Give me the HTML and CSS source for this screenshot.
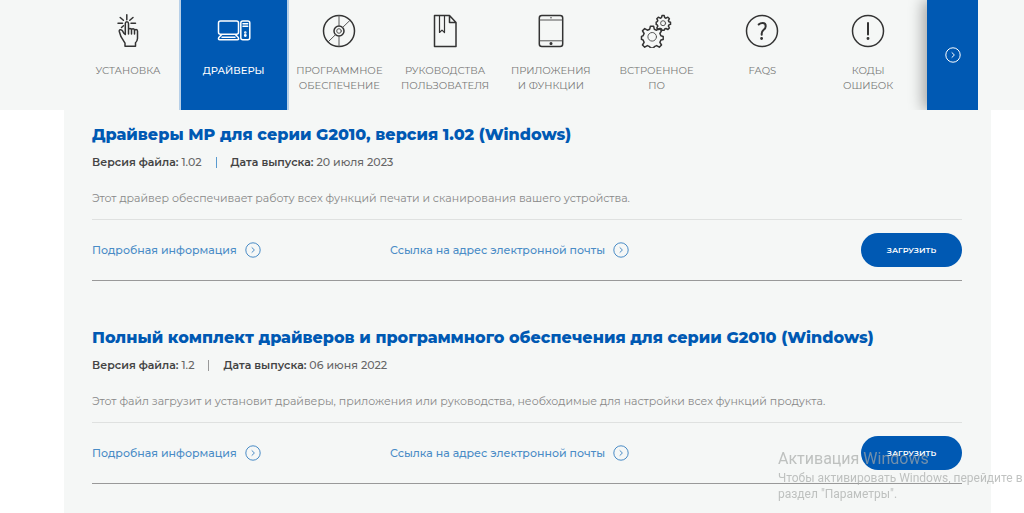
FILE: index.html
```html
<!DOCTYPE html>
<html lang="ru">
<head>
<meta charset="utf-8">
<meta name="viewport" content="width=device-width, initial-scale=1">
<title>Драйверы</title>
<link rel="stylesheet" href="styles.css">
</head>
<body>
<svg class="sprite" aria-hidden="true">
  <symbol id="chevron" viewBox="0 0 16 16">
    <circle cx="8" cy="8" r="7.2"/><path d="M6.7 5.4 9.4 8l-2.7 2.6"/>
  </symbol>
</svg>
<nav class="tabs">
  <div class="tabs-list">
    <a class="tab" href="#">
      <svg class="icon" viewBox="0 0 34 34"><path d="M14.300 20.500V9.500q0-1.800 1.600-1.800t1.600 1.800v6.200q0-1.300 1.500-1.300t1.500 1.600q.2-1.200 1.500-1.200t1.500 1.700q.2-1 1.500-1t1.500 1.500v7.500q-.2 2.600-2 4.200v3.500H14v-3l-4-6.500-1.700-5.200q-.3-1.600 1-1.800 1.400-.2 2.200 1.200l1.300 2.300zM17.500 15v5M20.500 15.500v4.500M23.500 16.500v3.500"/><path d="M15.800.8v5M9.200 3.500l3.200 2.800M22 3.500l-3.200 2.800M7 9.300h4.500M20 9.300h4.500M10.500 13.500l2-1.800"/></svg>
      <span>Установка</span></a>
    <a class="tab active" href="#" aria-current="page">
      <svg class="icon" viewBox="0 0 34 34"><rect x="1.500" y="7" width="20" height="13.200" rx="2"/><path d="M4.500 20.700 1.800 23.500q-1 2.200 1 2.200h17.500q2 0 1-2.200l-2.700-2.800M5 23.200h13"/><rect x="23.800" y="7" width="9" height="18.700" rx="2"/><path d="M26 9.700h4.700M26 12.200h4.700"/><circle cx="28.300" cy="18.500" r=".5"/><circle cx="28.300" cy="21.500" r=".7"/></svg>
      <span>Драйверы</span></a>
    <a class="tab" href="#">
      <svg class="icon" viewBox="0 0 34 34"><circle cx="17" cy="17" r="15.500"/><circle cx="17" cy="17" r="5"/><circle class="thin" cx="17" cy="17" r="2.300"/><path class="thin" d="M17 1.500V12M17 22v10.500M27.800 6.500l-7.200 7M6.300 27.700l7.200-7"/></svg>
      <span>Программное обеспечение</span></a>
    <a class="tab" href="#">
      <svg class="icon" viewBox="0 0 34 34"><path d="M6.500 1.500h15l6.500 7v24H6.500zM21.500 1.500v7H28"/><path class="mark" d="M11.500 1.500v17l2.500-2.400 2.500 2.400v-17"/></svg>
      <span>Руководства пользователя</span></a>
    <a class="tab" href="#">
      <svg class="icon" viewBox="0 0 34 34"><rect x="5.300" y="1.500" width="23.400" height="31" rx="2.500"/><path class="thin" d="M6 6h22M6 26.800h22M16.500 3.800h1"/><circle class="solid" cx="17" cy="29.500" r=".8"/></svg>
      <span>Приложения<br>и функции</span></a>
    <a class="tab" href="#">
      <svg class="icon" viewBox="0 0 34 34"><path d="M9.700 15.200l.7-3h3.200l.7 3 2.300 1 2.700-1.600 2.200 2.200-1.600 2.700 1 2.300 2.300.6v3l-2.300.6-1 2.300 1.600 2.700-2.200 2.200-2.700-1.600-2.300 1-.7 1.400h-3.200l-.7-1.400-2.300-1-2.700 1.600-2.200-2.200 1.600-2.700-1-2.300-1.600-.6v-3l1.600-.6 1-2.300-1.600-2.700 2.200-2.200 2.700 1.600z"/><circle class="thin" cx="12.200" cy="22.800" r="4.300"/><path d="M21.500 3.600l.5-2h2.200l.5 2 1.300.6 1.900-1 1.500 1.500-1 1.900.5 1.100 1.600.5v2.200l-1.600.5-.5 1.200 1 1.900-1.500 1.500-1.900-1-1.300.5-.5 1.200H22l-.5-1.200-1.300-.5-1.900 1-1.500-1.500 1-1.900-.6-1.200-1-.5V8.200l1-.5.600-1.100-1-1.900 1.500-1.500 1.900 1z"/><circle class="thin" cx="23.100" cy="9.200" r="2.500"/></svg>
      <span>Встроенное<br>ПО</span></a>
    <a class="tab" href="#">
      <svg class="icon" viewBox="0 0 34 34"><circle cx="17" cy="17" r="15.500"/><path class="heavy" d="M13.700 10.500q1.500-1.500 4-1.500 3 0 3 3.200 0 2-2 3.500-2 1.600-2 3.800v1.200"/><circle class="solid" cx="16.600" cy="24.500" r=".7"/></svg>
      <span>FAQs</span></a>
    <a class="tab" href="#">
      <svg class="icon" viewBox="0 0 34 34"><circle cx="17" cy="17" r="15.500"/><path class="heavy" d="M17 9v11.500"/><circle class="solid" cx="17" cy="24.500" r=".7"/></svg>
      <span>Коды<br>ошибок</span></a>
  </div>
  <button class="next" type="button" aria-label="Далее"><svg class="chevron"><use href="#chevron"/></svg></button>
</nav>
<main class="downloads">
  <article class="item">
    <h2>Драйверы MP для серии G2010, версия 1.02 (Windows)</h2>
    <p class="meta"><span><b>Версия файла:</b> 1.02</span><i class="bar blue"></i><span><b>Дата выпуска:</b> 20 июля 2023</span></p>
    <p class="about">Этот драйвер обеспечивает работу всех функций печати и сканирования вашего устройства.</p>
    <div class="actions">
      <a href="#">Подробная информация<svg class="chevron"><use href="#chevron"/></svg></a>
      <a href="#">Ссылка на адрес электронной почты<svg class="chevron"><use href="#chevron"/></svg></a>
      <button class="load" type="button">Загрузить</button>
    </div>
  </article>
  <article class="item">
    <h2>Полный комплект драйверов и программного обеспечения для серии G2010 (Windows)</h2>
    <p class="meta"><span><b>Версия файла:</b> 1.2</span><i class="bar"></i><span><b>Дата выпуска:</b> 06 июня 2022</span></p>
    <p class="about">Этот файл загрузит и установит драйверы, приложения или руководства, необходимые для настройки всех функций продукта.</p>
    <div class="actions">
      <a href="#">Подробная информация<svg class="chevron"><use href="#chevron"/></svg></a>
      <a href="#">Ссылка на адрес электронной почты<svg class="chevron"><use href="#chevron"/></svg></a>
      <button class="load" type="button">Загрузить</button>
    </div>
  </article>
</main>
<aside class="activation">
  <strong>Активация Windows</strong>
  <span>Чтобы активировать Windows, перейдите в<br>раздел "Параметры".</span>
</aside>
</body>
</html>
```
FILE: styles.css
```css
* { box-sizing: border-box; }
body {
  margin: 0;
  min-height: 100vh;
  display: flex;
  flex-direction: column;
  overflow: hidden;
  background: #fff;
  color: #666;
  font: 500 11px/20px Montserrat, Inter, "Open Sans", sans-serif;
}
.sprite { position: absolute; width: 0; height: 0; }
svg { fill: none; stroke: currentColor; }

.tabs {
  display: flex;
  padding: 0 46px 0 75px;
  background: #f5f7f6;
}
.tabs-list {
  flex: 1;
  display: flex;
  overflow: hidden;
  padding-right: 6px;
}
.tab {
  flex: 1;
  display: flex;
  flex-direction: column;
  align-items: center;
  gap: 15px;
  min-height: 110px;
  padding-top: 14px;
  color: #777;
  font-size: 10px;
  font-weight: 400;
  line-height: 15px;
  text-align: center;
  text-decoration: none;
  text-transform: uppercase;
}
.tab.active {
  background: #0059b3;
  box-shadow: 0 0 0 2px #b7d0e8;
  color: #fff;
  font-weight: 500;
}
.icon {
  width: 34px;
  height: 34px;
  color: #333;
  stroke-width: 1.5;
  stroke-linejoin: round;
  stroke-linecap: round;
}
.active .icon { color: #fff; }
.thin { stroke-width: 1; stroke: #555; }
.mark { stroke-width: 1.2; }
.heavy { stroke-width: 2; }
.solid { fill: currentColor; }
.chevron { width: 16px; height: 16px; flex: none; }
.next {
  width: 51px;
  display: grid;
  place-items: center;
  padding: 0;
  border: 0;
  background: #0059b3;
  box-shadow: -4px 0 14px #0005;
  clip-path: inset(0 0 0 -22px);
  color: #fff;
}

.downloads {
  flex: 1;
  margin: 0 33px 0 64px;
  padding: 12px 29px 0 28px;
  background: #f5f7f6;
}
.item {
  margin-bottom: 44px;
  border-bottom: 1px solid #999;
}
h2 {
  margin: 0 0 4px;
  color: #0059b3;
  font-size: 16px;
  font-weight: 800;
  line-height: 26px;
  white-space: nowrap;
}
.meta { display: flex; align-items: center; margin: 0 0 16px; }
.meta span { white-space: pre; }
.meta b { color: #444; font-weight: 600; }
.bar { width: 1px; height: 11px; margin: 0 14px; background: #999; }
.bar.blue { background: #5a9bd0; }
.about { margin: 0 0 11px; color: #888; font-weight: 400; white-space: nowrap; }
.actions {
  display: grid;
  grid-template-columns: 298px 1fr auto;
  align-items: center;
  padding: 13px 0;
  border-top: 1px solid #dfe1e0;
}
.actions a {
  display: flex;
  align-items: center;
  gap: 8px;
  color: #4a8cc6;
  text-decoration: none;
}
.load {
  width: 101px;
  height: 34px;
  padding: 0;
  border: 0;
  border-radius: 17px;
  background: #0059b3;
  color: #fff;
  font: 600 8px/12px Montserrat, Inter, sans-serif;
  text-transform: uppercase;
}
.activation {
  position: fixed;
  right: 0;
  bottom: 11px;
  width: 246px;
  color: #a5a8a7b0;
  font: 12px/16px Roboto, "Noto Sans", sans-serif;
  white-space: nowrap;
}
.activation strong {
  display: block;
  font-size: 16px;
  font-weight: 400;
  line-height: 22px;
}
```
